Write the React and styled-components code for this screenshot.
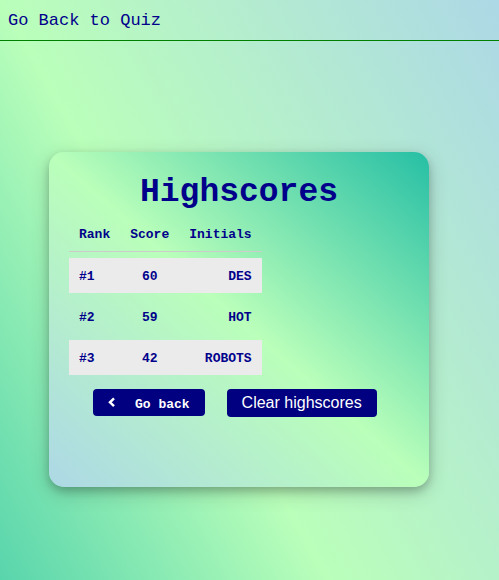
import React from "react";
import styled, { createGlobalStyle } from "styled-components";

const GlobalStyle = createGlobalStyle`
  *, *::before, *::after {
    box-sizing: border-box;
  }
  body {
    margin: 0;
    color: darkblue;
    font-family: "Courier New", "Liberation Mono", monospace;
  }
`;

const Page = styled.div`
  min-height: 100vh;
  background: linear-gradient(to top right, #26bfa5, #baffba, lightblue) 0 0 / 100% 152vh;
`;

const NavBar = styled.nav`
  padding: 9px 8px 7px;
  border-bottom: 1px solid green;
`;

const NavLink = styled.a`
  display: block;
  color: darkblue;
  font-size: 17px;
  line-height: 24px;
  text-decoration: none;
`;

const Card = styled.main`
  max-width: 380px;
  min-height: 335px;
  margin: 111px 70px 48px 49px;
  padding: 22px 20px 20px;
  border-radius: 15px;
  background: linear-gradient(to top right, lightblue, #baffba, #26bfa5);
  box-shadow: 0 4px 8px 0 rgba(0, 0, 0, 0.2), 0 6px 20px 0 rgba(0, 0, 0, 0.19);
`;

const Title = styled.h1`
  margin: 0;
  font-size: 33px;
  line-height: 37px;
  text-align: center;
`;

const ScoreTable = styled.table`
  border-spacing: 0 6px;
  font-size: 13px;
  font-weight: bold;
  line-height: 15px;
`;

const HeadCell = styled.th`
  padding: 10px 10px 9px;
  border-bottom: 1px solid #ccc;
  text-align: ${({ $align }) => $align};
`;

const ScoreRow = styled.tr`
  &:nth-child(odd) {
    background: #ebebeb;
  }
`;

const Cell = styled.td`
  padding: 11px 10px 9px;
  text-align: ${({ $align }) => $align};
`;

const Actions = styled.div`
  display: flex;
  flex-wrap: wrap;
  align-items: flex-start;
  gap: 22px;
  padding: 8px 24px 0;
`;

const Button = styled.button`
  display: flex;
  align-items: center;
  padding: 5px 15px;
  border: 0;
  border-radius: 4px;
  background: navy;
  color: white;
  font-family: "Liberation Sans", Arial, sans-serif;
  font-size: 16px;
  line-height: 18px;
  cursor: pointer;
`;

const BackButton = styled(Button)`
  gap: 19px;
  padding: 8px 15px 4px;
  font-family: "Courier New", "Liberation Mono", monospace;
  font-size: 13px;
  font-weight: bold;
  line-height: 15px;
`;

const BackIcon = styled.svg`
  width: 8px;
  height: 11px;
  align-self: flex-start;
`;

const columns = [
  { key: "rank", label: "Rank", align: "left" },
  { key: "score", label: "Score", align: "center" },
  { key: "initials", label: "Initials", align: "right" },
];

const scores = [
  { rank: "#1", score: 60, initials: "DES" },
  { rank: "#2", score: 59, initials: "HOT" },
  { rank: "#3", score: 42, initials: "ROBOTS" },
];

export default function App() {
  return (
    <Page>
      <GlobalStyle />
      <NavBar>
        <NavLink href="#quiz">Go Back to Quiz</NavLink>
      </NavBar>
      <Card>
        <Title>Highscores</Title>
        <ScoreTable>
          <thead>
            <tr>
              {columns.map(({ key, label, align }) => (
                <HeadCell key={key} scope="col" $align={align}>
                  {label}
                </HeadCell>
              ))}
            </tr>
          </thead>
          <tbody>
            {scores.map((entry) => (
              <ScoreRow key={entry.rank}>
                {columns.map(({ key, align }) => (
                  <Cell key={key} $align={align}>
                    {entry[key]}
                  </Cell>
                ))}
              </ScoreRow>
            ))}
          </tbody>
        </ScoreTable>
        <Actions>
          <BackButton type="button">
            <BackIcon viewBox="0 0 8 11" fill="none" aria-hidden="true">
              <path d="M6 1.4 2 5.3l4 3.9" stroke="currentColor" strokeWidth="2.5" />
            </BackIcon>
            Go back
          </BackButton>
          <Button type="button">Clear highscores</Button>
        </Actions>
      </Card>
    </Page>
  );
}
